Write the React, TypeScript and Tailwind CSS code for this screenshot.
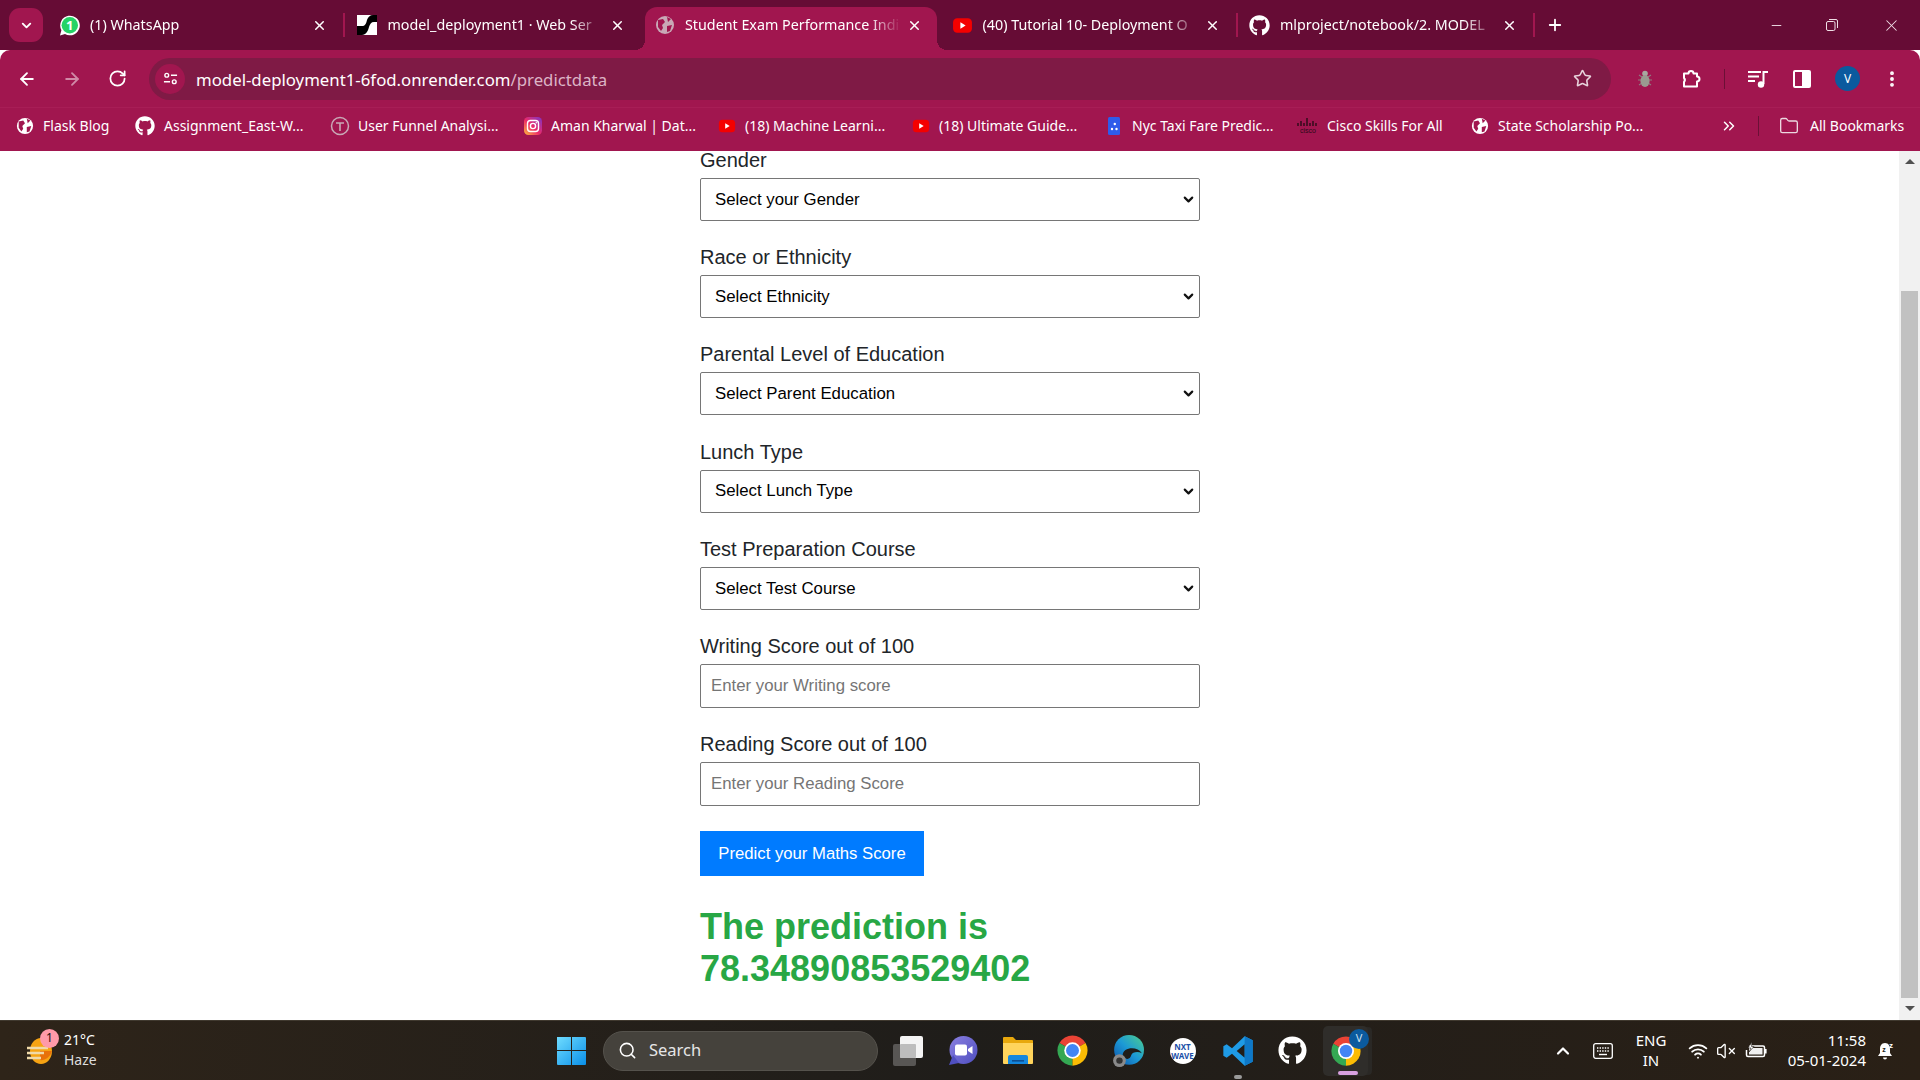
import React from "react";
import { ArrowLeft, ArrowRight, RotateCw, Star, X, Plus, Minus, ChevronDown, ChevronsRight, Folder, ChevronUp, Wifi, VolumeX, Search, EllipsisVertical } from "lucide-react";
import { FaGithub } from "react-icons/fa";

const ui = "font-['Noto_Sans',sans-serif]";

function ChromeIcon({ cls }: { cls: string }) {
  return (
    <svg viewBox="0 0 24 24" className={cls}>
      <path d="M12 12 L21.5 6.5 A11 11 0 0 0 2.5 6.5 Z" fill="#ea4335" />
      <path d="M12 12 L2.5 6.5 A11 11 0 0 0 12 23 Z" fill="#34a853" />
      <path d="M12 12 L12 23 A11 11 0 0 0 21.5 6.5 Z" fill="#fbbc04" />
      <circle cx="12" cy="12" r="6" fill="#fff" />
      <circle cx="12" cy="12" r="4.7" fill="#4285f4" />
    </svg>
  );
}
function Yt({ cls = "w-[18px] h-[18px] shrink-0" }: { cls?: string }) {
  return (
    <svg viewBox="0 0 20 20" className={cls}>
      <rect x="1" y="3" width="18" height="14" rx="4" fill="#f40000" />
      <path d="M8 7 L13 10 L8 13 Z" fill="#fff" />
    </svg>
  );
}
function Insta() {
  return (
    <svg viewBox="0 0 20 20" className="w-[20px] h-[20px] shrink-0">
      <defs>
        <linearGradient id="ig" x1="0" y1="1" x2="1" y2="0">
          <stop offset="0" stopColor="#fdc13a" />
          <stop offset="0.45" stopColor="#ee2a67" />
          <stop offset="1" stopColor="#7a35c9" />
        </linearGradient>
      </defs>
      <rect x="1" y="1" width="18" height="18" rx="4.5" fill="url(#ig)" />
      <rect x="4.5" y="4.5" width="11" height="11" rx="3" fill="none" stroke="#fff" strokeWidth="1.4" />
      <circle cx="10" cy="10" r="2.6" fill="none" stroke="#fff" strokeWidth="1.4" />
      <circle cx="13.3" cy="6.7" r="0.8" fill="#fff" />
    </svg>
  );
}
function WhatsIcon() {
  return (
    <svg viewBox="0 0 21 21" className="w-[21px] h-[21px] shrink-0">
      <path d="M1 20.5 L2.4 15.2 A9.8 9.8 0 1 1 6 18.9 Z" fill="#fff" />
      <circle cx="10.8" cy="10.3" r="8.2" fill="#25d366" />
      <text x="10.8" y="15" textAnchor="middle" fontSize="13" fontWeight="700" fill="#fff" fontFamily="Noto Sans">1</text>
    </svg>
  );
}
function RenderIcon() {
  return (
    <svg viewBox="0 0 20 20" className="w-[20px] h-[20px] shrink-0">
      <rect width="20" height="20" fill="#fff" />
      <path d="M0 20 V11 H5 C8 11 9 9 10 5 C11 2 13 0 16 0 H20 V7 H17 C14 7 13 9 12 12 C11 16 9 20 5 20 Z" fill="#000" />
    </svg>
  );
}
function GlobeFill({ cls, bg = "#a1164f" }: { cls: string; bg?: string }) {
  return (
    <svg viewBox="0 0 20 20" className={cls}>
      <circle cx="10" cy="10" r="9" fill="currentColor" />
      <path d="M3 5 L8 4 L10 7 L7 10 L8 13 L6 16 L3 12 Z M12 2 L16 4 L13 7 Z M12 11 L17 10 L15 16 L12 17 Z" fill={bg} />
    </svg>
  );
}
function FunnelIcon() {
  return (
    <svg viewBox="0 0 20 20" className="w-[20px] h-[20px] shrink-0">
      <circle cx="10" cy="10" r="8.5" fill="none" stroke="#c9a8b6" strokeWidth="1.5" />
      <path d="M6 7 H14 M10 7 V15" stroke="#c9a8b6" strokeWidth="1.6" />
    </svg>
  );
}
function NycIcon() {
  return (
    <svg viewBox="0 0 20 20" className="w-[20px] h-[20px] shrink-0">
      <rect x="4" y="1" width="12" height="18" rx="1.5" fill="#2f5bea" />
      <circle cx="10.8" cy="8" r="1.2" fill="#fff" />
      <circle cx="8" cy="13" r="1.2" fill="#fff" />
      <circle cx="12.5" cy="13" r="1.2" fill="#fff" />
    </svg>
  );
}
function CiscoIcon() {
  return (
    <svg viewBox="0 0 22 20" className="w-[22px] h-[20px] shrink-0">
      <path d="M1 7 V10 M4 5 V10 M7 7 V10 M10 2 V10 M13 7 V10 M16 5 V10 M19 7 V10" stroke="#2b0a18" strokeWidth="1.4" />
      <text x="11" y="17" textAnchor="middle" fontSize="7" fill="#2b0a18" fontFamily="Liberation Sans">cisco</text>
    </svg>
  );
}

const tabs = [
  { icon: <WhatsIcon />, title: "(1) WhatsApp", sep: true },
  { icon: <RenderIcon />, title: "model_deployment1 · Web Ser", sep: false },
  { icon: <GlobeFill cls="w-[20px] h-[20px] shrink-0 text-[#c9a8b6]" />, title: "Student Exam Performance Indi", active: true, sep: false },
  { icon: <Yt cls="w-[21px] h-[21px] shrink-0" />, title: "(40) Tutorial 10- Deployment O", sep: true },
  { icon: <FaGithub className="w-[21px] h-[21px] shrink-0 text-white" />, title: "mlproject/notebook/2. MODEL", sep: true },
];

function TabStrip() {
  return (
    <div className="flex items-end h-[50px] bg-[#660c35] pl-[9px] shrink-0">
      <div className="w-[34px] h-[34px] mb-[8px] mr-[7px] rounded-[11px] bg-[#a1164f] flex items-center justify-center shrink-0">
        <ChevronDown className="w-[15px] h-[15px] text-white" strokeWidth={3} />
      </div>
      {tabs.map((t) => (
        <div key={t.title} className="flex items-center w-[297.5px] shrink-0 h-[43px]">
          <div className={`relative flex items-center w-[292px] h-[43px] pl-[9px] pb-[7px] rounded-t-[12px] shrink-0 ${t.active ? "bg-[#a1164f]" : ""}`}>
            {t.active && (
              <>
                <div className="absolute -left-[10px] bottom-0 w-[10px] h-[10px] bg-[radial-gradient(circle_at_0_0,transparent_10px,#a1164f_10px)]" />
                <div className="absolute -right-[10px] bottom-0 w-[10px] h-[10px] bg-[radial-gradient(circle_at_100%_0,transparent_10px,#a1164f_10px)]" />
              </>
            )}
            <div className="w-[21px] flex justify-center shrink-0">{t.icon}</div>
            <div className={`ml-[10px] w-[216px] overflow-hidden whitespace-nowrap text-[14.3px] text-white [mask-image:linear-gradient(to_right,black_85%,transparent)] ${ui}`}>
              {t.title}
            </div>
            <X className="w-[15px] h-[15px] text-white ml-[6px] shrink-0" strokeWidth={2.4} />
          </div>
          <div className={`w-[2px] h-[24px] ml-[1px] mb-[7px] shrink-0 ${t.sep ? "bg-[#a1164f]" : ""}`} />
        </div>
      ))}
      <Plus className="w-[18px] h-[18px] text-white mb-[16px] ml-[8px] shrink-0" strokeWidth={2.4} />
      <div className="ml-auto flex self-start h-[50px] items-center pr-[1px]">
        <div className="w-[56px] flex justify-center"><Minus className="w-[15px] h-[15px] text-[#f0dfe6]" strokeWidth={1.5} /></div>
        <div className="w-[56px] mr-[3px] flex justify-center">
          <svg viewBox="0 0 14 14" className="w-[14px] h-[14px]">
            <rect x="1.5" y="3.5" width="8.5" height="9" rx="1.5" fill="none" stroke="#f0dfe6" strokeWidth="1" />
            <path d="M4 1.5 H11 Q12.5 1.5 12.5 3 V10" fill="none" stroke="#f0dfe6" strokeWidth="1" />
          </svg>
        </div>
        <div className="w-[56px] flex justify-center"><X className="w-[19px] h-[19px] text-[#f0dfe6]" strokeWidth={1.3} /></div>
      </div>
    </div>
  );
}

function Toolbar() {
  return (
    <div className="flex items-center h-[57px] bg-[#a1164f] rounded-t-[10px] shrink-0 pl-[17px]">
      <ArrowLeft className="w-[20px] h-[20px] text-white shrink-0" strokeWidth={2.2} />
      <ArrowRight className="w-[20px] h-[20px] text-[#d08aa7] ml-[25px] shrink-0" strokeWidth={2.2} />
      <RotateCw className="w-[19px] h-[19px] text-white ml-[26px] shrink-0" strokeWidth={2.2} />
      <div className="flex items-center ml-[22px] w-[1462px] h-[42px] rounded-full bg-[#7f1a45] pl-[6px] shrink-0">
        <div className="w-[30px] h-[30px] rounded-full bg-[#a1164f] flex items-center justify-center shrink-0">
          <svg viewBox="0 0 16 16" className="w-[15px] h-[15px]">
            <circle cx="4" cy="4.5" r="2" fill="none" stroke="#fff" strokeWidth="1.5" />
            <path d="M8.5 4.5 H15 M1 11.5 H7.5" stroke="#fff" strokeWidth="1.5" />
            <circle cx="12" cy="11.5" r="2" fill="none" stroke="#fff" strokeWidth="1.5" />
          </svg>
        </div>
        <div className={`ml-[11px] mt-[2px] text-[16.8px] text-white whitespace-nowrap ${ui}`}>
          model-deployment1-6fod.onrender.com<span className="text-[#dcb4c5]">/predictdata</span>
        </div>
        <Star className="w-[19px] h-[19px] text-[#e8d3dc] ml-auto mr-[19px] shrink-0" strokeWidth={2} />
      </div>
      <svg viewBox="0 0 16 20" className="w-[16px] h-[20px] ml-[26px] shrink-0">
        <path d="M2 6 L5 8 M14 6 L11 8 M1 11 H4 M15 11 H12 M2 16 L5 14 M14 16 L11 14" stroke="#8f7a80" strokeWidth="1.2" />
        <circle cx="8" cy="4.5" r="2.8" fill="#a8a8a0" />
        <ellipse cx="8" cy="12" rx="4.6" ry="6" fill="#9a9a90" />
      </svg>
      <svg viewBox="0 0 20 18" className="w-[20px] h-[18px] ml-[29px] shrink-0">
        <path d="M2 3.5 H6.5 A2.5 2.5 0 0 1 11.5 3.5 H15 V6.5 A2.5 2.5 0 0 1 15 11.5 V16.5 H2 V12 A3 3 0 0 0 2 8 Z" fill="none" stroke="#fff" strokeWidth="2" strokeLinejoin="round" />
      </svg>
      <div className="w-[1px] h-[20px] bg-[#6b1036] ml-[22px] shrink-0" />
      <svg viewBox="0 0 22 20" className="w-[22px] h-[20px] ml-[22px] shrink-0">
        <path d="M1 3 H14 M1 7.5 H12 M1 12 H8" stroke="#fff" strokeWidth="2.2" />
        <path d="M16.5 15 V3 H21" fill="none" stroke="#fff" strokeWidth="2" />
        <circle cx="14" cy="15.5" r="3.2" fill="#fff" />
      </svg>
      <div className="w-[18px] h-[18px] ml-[24px] border-2 border-white rounded-[2px] flex justify-end shrink-0">
        <div className="w-[7px] h-full bg-white" />
      </div>
      <div className={`w-[25px] h-[25px] ml-[24px] rounded-full bg-[#0b5a9e] text-white text-[12px] flex items-center justify-center shrink-0 ${ui}`}>V</div>
      <EllipsisVertical className="w-[20px] h-[20px] text-white ml-[22px] shrink-0" strokeWidth={2.6} />
    </div>
  );
}

const bookmarks = [
  { icon: <GlobeFill cls="w-[18px] h-[18px] shrink-0 text-white" />, label: "Flask Blog", cls: "ml-[16px]", tx: "ml-[9px] w-[65px]" },
  { icon: <FaGithub className="w-[20px] h-[20px] shrink-0 text-white" />, label: "Assignment_East-W...", cls: "ml-[27px]", tx: "ml-[9px] w-[140px]" },
  { icon: <FunnelIcon />, label: "User Funnel Analysi...", cls: "ml-[26px]", tx: "ml-[8px] w-[139px]" },
  { icon: <Insta />, label: "Aman Kharwal | Dat...", cls: "ml-[26px]", tx: "ml-[8px] w-[140px]" },
  { icon: <Yt />, label: "(18) Machine Learni...", cls: "ml-[27px]", tx: "ml-[9px] w-[141px]" },
  { icon: <Yt />, label: "(18) Ultimate Guide...", cls: "ml-[26px]", tx: "ml-[9px] w-[138px]" },
  { icon: <NycIcon />, label: "Nyc Taxi Fare Predic...", cls: "ml-[27px]", tx: "ml-[8px] w-[141px]" },
  { icon: <CiscoIcon />, label: "Cisco Skills For All", cls: "ml-[24px]", tx: "ml-[8px] w-[118px]" },
  { icon: <GlobeFill cls="w-[18px] h-[18px] shrink-0 text-white" />, label: "State Scholarship Po...", cls: "ml-[26px]", tx: "ml-[9px] w-[145px]" },
];

function Bookmarks() {
  return (
    <div className={`flex items-center h-[44px] pb-[8px] bg-[#a1164f] border-t border-[#a81d56] shrink-0 text-[14px] text-white whitespace-nowrap ${ui}`}>
      {bookmarks.map((b) => (
        <div key={b.label} className={`flex items-center shrink-0 ${b.cls}`}>
          {b.icon}
          <div className={b.tx}>{b.label}</div>
        </div>
      ))}
      <ChevronsRight className="w-[18px] h-[18px] text-white ml-[77px] shrink-0" />
      <div className="w-[1px] h-[20px] bg-[#6b1036] ml-[20px] shrink-0" />
      <Folder className="w-[20px] h-[20px] text-[#ecd8e0] ml-[20px] shrink-0" strokeWidth={1.6} />
      <div className="ml-[11px]">All Bookmarks</div>
    </div>
  );
}

function SelectField({ label, text }: { label: string; text: string }) {
  return (
    <div className="mb-[24.2px]">
      <label className="block h-[24px] leading-[24px] text-[20px] mb-[6px] text-[#212529]">{label}</label>
      <div className="relative">
        <select className="block appearance-none w-full h-[43px] border border-[#767676] rounded-[2px] bg-white pl-[14px] text-[16.8px] text-black">
          <option>{text}</option>
        </select>
        <ChevronDown className="absolute right-[4px] top-[14px] w-[15px] h-[15px] text-[#111111] pointer-events-none" strokeWidth={3.4} />
      </div>
    </div>
  );
}
function InputField({ label, text }: { label: string; text: string }) {
  return (
    <div className="mb-[24px]">
      <label className="block h-[24px] leading-[24px] text-[20px] mb-[6px] text-[#212529]">{label}</label>
      <input placeholder={text} className="block w-full h-[44px] border border-[#767676] rounded-[2px] bg-white pl-[10px] text-[16.8px] placeholder:text-[#757575]" />
    </div>
  );
}

function Page() {
  return (
    <div className="flex flex-1 min-h-0 bg-white">
      <main className="flex-1 overflow-hidden pt-[1px] font-['Liberation_Sans',sans-serif]">
        <div className="w-[500px] ml-[700px] -mt-[4px]">
          <SelectField label="Gender" text="Select your Gender" />
          <SelectField label="Race or Ethnicity" text="Select Ethnicity" />
          <SelectField label="Parental Level of Education" text="Select Parent Education" />
          <SelectField label="Lunch Type" text="Select Lunch Type" />
          <SelectField label="Test Preparation Course" text="Select Test Course" />
          <InputField label="Writing Score out of 100" text="Enter your Writing score" />
          <InputField label="Reading Score out of 100" text="Enter your Reading Score" />
          <button className="block h-[45px] w-[224px] mt-[25px] bg-[#007bff] text-white text-[16.7px]">Predict your Maths Score</button>
          <h2 className="mt-[30px] text-[36px] leading-[42px] font-bold text-[#28a745] w-[400px]">The prediction is 78.34890853529402</h2>
        </div>
      </main>
      <aside className="w-[21px] shrink-0 bg-[#f1f1f1] flex flex-col items-center">
        <div className="h-[21px] flex items-center justify-center shrink-0">
          <div className="w-0 h-0 border-x-[5px] border-x-transparent border-b-[5px] border-b-[#505050]" />
        </div>
        <div className="h-[119px] shrink-0" />
        <div className="h-[707px] w-[17px] bg-[#c1c1c1] shrink-0" />
        <div className="h-[21px] flex items-center justify-center shrink-0">
          <div className="w-0 h-0 border-x-[5px] border-x-transparent border-t-[5px] border-t-[#505050]" />
        </div>
      </aside>
    </div>
  );
}

function Taskbar() {
  return (
    <div className={`h-[60px] shrink-0 flex items-center border-t border-[#40392f] bg-gradient-to-r from-[#2e2419] via-[#1f1d1a] to-[#2a2016] text-white ${ui}`}>
      <div className="relative w-[26px] h-[26px] ml-[26px] shrink-0">
        <svg viewBox="0 0 26 26" className="w-[26px] h-[26px]">
          <ellipse cx="15" cy="13" rx="11" ry="13" fill="#f6a313" />
          <path d="M14 22 A11 13 0 0 0 26 13 H14 Z" fill="#e8710a" />
          <path d="M1 10 H22 M1 15 H18 M1 20 H15" stroke="#f0d9a8" strokeWidth="2.4" />
        </svg>
        <div className="absolute -top-[9px] left-[14px] w-[19px] h-[19px] rounded-full bg-[#ff9aa9] text-[#201010] text-[12px] flex items-center justify-center">1</div>
      </div>
      <div className="ml-[12px] mb-[2px] w-[40px] text-[14px] leading-[20px] shrink-0">
        <div>21°C</div>
        <div className="text-[#dddddd]">Haze</div>
      </div>
      <svg viewBox="0 0 29 29" className="w-[29px] h-[29px] ml-[453px] shrink-0">
        <defs>
          <linearGradient id="win" x1="0" y1="0" x2="1" y2="1">
            <stop offset="0" stopColor="#6fdcff" />
            <stop offset="1" stopColor="#0a8fe8" />
          </linearGradient>
        </defs>
        <path d="M0 1 H14 V14 H0 Z M15 1 H28 Q29 1 29 2 V14 H15 Z M0 15 H14 V29 H1 Q0 29 0 28 Z M15 15 H29 V28 Q29 29 28 29 H15 Z" fill="url(#win)" />
      </svg>
      <div className="ml-[17px] w-[275px] h-[40px] rounded-full bg-[#45423c] border border-[#55524c] flex items-center pl-[14px] shrink-0">
        <Search className="w-[19px] h-[19px] text-white" strokeWidth={2} />
        <span className="ml-[12px] text-[16.5px] text-[#e6e6e6]">Search</span>
      </div>
      <div className="ml-[2px] flex items-center shrink-0">
        <div className="w-[55px] flex justify-center">
          <svg viewBox="0 0 30 30" className="w-[30px] h-[30px]">
            <rect x="0" y="8" width="23" height="22" rx="2" fill="#585654" />
            <rect x="7" y="0" width="23" height="22" rx="2" fill="#f4f4f4" />
            <rect x="7" y="8" width="16" height="14" rx="1" fill="#bdbdbd" />
          </svg>
        </div>
        <div className="w-[55px] flex justify-center">
          <svg viewBox="0 0 30 30" className="w-[30px] h-[30px]">
            <defs>
              <linearGradient id="tm" x1="0" y1="0" x2="1" y2="1">
                <stop offset="0" stopColor="#8a7fe0" />
                <stop offset="1" stopColor="#4f4fc0" />
              </linearGradient>
            </defs>
            <circle cx="15.5" cy="14" r="14" fill="url(#tm)" />
            <path d="M1 29 L5 19 L11 27 Z" fill="#4f4fc0" />
            <rect x="7" y="8.5" width="12" height="11" rx="2" fill="#fff" />
            <path d="M20 13 L24.5 10 V18 L20 15 Z" fill="#fff" />
          </svg>
        </div>
        <div className="w-[55px] flex justify-center">
          <svg viewBox="0 0 30 27" className="w-[30px] h-[27px]">
            <path d="M0 1 Q0 0 1 0 H10 L13 3 H29 Q30 3 30 4 V10 H0 Z" fill="#e8a80c" />
            <path d="M0 6 H30 V26 Q30 27 29 27 H1 Q0 27 0 26 Z" fill="#ffd45c" />
            <path d="M5 20 Q5 18 7 18 H23 Q25 18 25 20 V27 H5 Z" fill="#1487de" />
            <rect x="9" y="23" width="12" height="1.6" fill="#0c4f94" />
          </svg>
        </div>
        <div className="w-[55px] flex justify-center"><ChromeIcon cls="w-[33px] h-[33px]" /></div>
        <div className="w-[55px] flex justify-center">
          <svg viewBox="0 0 30 30" className="w-[32px] h-[32px]">
            <defs>
              <linearGradient id="edge" x1="1" y1="0" x2="0" y2="1">
                <stop offset="0" stopColor="#4fd08a" />
                <stop offset="0.5" stopColor="#1c9ad6" />
                <stop offset="1" stopColor="#0c4fa8" />
              </linearGradient>
            </defs>
            <circle cx="16" cy="14" r="14" fill="url(#edge)" />
            <path d="M10 19 C10 11 24 10 28 17 C24 15 19 16 18 19 C17 23 13 24 10 19 Z" fill="#1f1d1a" />
            <circle cx="7" cy="24" r="6" fill="#8a8a8a" />
            <circle cx="7" cy="24" r="3" fill="#333" />
          </svg>
        </div>
        <div className="w-[55px] flex justify-center">
          <div className="w-[26px] h-[26px] rounded-full bg-white text-[#1b4fa8] text-[8px] leading-[9px] font-bold flex flex-col items-center justify-center">
            <span>NXT</span><span>WAVE</span>
          </div>
        </div>
        <div className="w-[55px] flex flex-col items-center relative">
          <svg viewBox="0 0 24 24" className="w-[32px] h-[32px]">
            <path fillRule="evenodd" d="M17 1 L23 4 V20 L17 23 L7.5 14 L3.5 17 L1 15.5 V8.5 L3.5 7 L7.5 10 Z M17 7 L11 12 L17 17 Z" fill="#1f9be6" />
            <path d="M17 1 L23 4 V20 L17 23 Z" fill="#0e78c8" />
          </svg>
          <div className="absolute -bottom-[12px] w-[8px] h-[4px] rounded-full bg-[#9a9a9a]" />
        </div>
        <div className="w-[55px] flex justify-center">
          <FaGithub className="w-[29px] h-[29px] text-white" />
        </div>
        <div className="relative w-[45px] h-[50px] ml-[3px] rounded-[5px] bg-[#2f2d2a] shadow-[5px_0_0_-1px_#2a2825] flex items-center justify-center">
          <ChromeIcon cls="w-[32px] h-[32px]" />
          <div className="absolute top-[3px] right-[-1px] w-[20px] h-[20px] rounded-full bg-[#0b5a9e] text-[#cfe0f0] text-[11px] flex items-center justify-center">V</div>
          <div className="absolute bottom-[1px] left-[15px] w-[20px] h-[4px] rounded-full bg-[#d8a0e0]" />
        </div>
      </div>
      <ChevronUp className="w-[20px] h-[20px] text-white ml-[185px] shrink-0" strokeWidth={2.6} />
      <svg viewBox="0 0 20 16" className="w-[20px] h-[16px] ml-[20px] shrink-0">
        <rect x="0.7" y="0.7" width="18.6" height="14.6" rx="2" fill="none" stroke="#fff" strokeWidth="1.3" />
        <path d="M4 5 H16 M4 8 H16" stroke="#fff" strokeWidth="1.4" strokeDasharray="1.4 1.2" />
        <path d="M6 11.5 H14" stroke="#fff" strokeWidth="1.4" />
      </svg>
      <div className="ml-[19px] w-[38px] text-center text-[15px] leading-[20px] mb-[2px] shrink-0">
        <div>ENG</div>
        <div>IN</div>
      </div>
      <Wifi className="w-[20px] h-[20px] text-white ml-[18px] shrink-0" strokeWidth={2.2} />
      <VolumeX className="w-[20px] h-[20px] text-white ml-[8px] shrink-0" strokeWidth={1.6} />
      <svg viewBox="0 0 22 18" className="w-[22px] h-[18px] ml-[9px] shrink-0">
        <path d="M4 4 H18 Q19.5 4 19.5 5.5 V13 Q19.5 14.5 18 14.5 H3 Q1.5 14.5 1.5 13 V8" fill="none" stroke="#fff" strokeWidth="1.5" />
        <path d="M4 6 H17.5 V12.5 H4 Z" fill="#f0f0f0" />
        <path d="M7 0 L3 6 H6 L4 10 L9 4.5 H6.5 Z" fill="#fff" stroke="#221d17" strokeWidth="0.6" />
        <rect x="20" y="7" width="1.6" height="4.5" fill="#fff" />
      </svg>
      <div className="ml-[18px] w-[81px] text-right text-[15px] leading-[20px] mb-[2px] shrink-0">
        <div>11:58</div>
        <div>05-01-2024</div>
      </div>
      <svg viewBox="0 0 18 20" className="w-[18px] h-[20px] ml-[11px] shrink-0">
        <path d="M8 2 C4.5 2 3 5 3 8 V12 L1 15 H15 L13 12 V8 C13 5 11.5 2 8 2 Z" fill="#fff" />
        <path d="M6 16.5 H10 A2 2 0 0 1 6 16.5 Z" fill="#fff" />
        <text x="5.2" y="11" fontSize="7" fontWeight="700" fill="#221d17" fontFamily="Liberation Sans">z</text>
        <text x="12" y="6.5" fontSize="8" fontWeight="700" fill="#fff" fontFamily="Liberation Sans">z</text>
      </svg>
    </div>
  );
}

export default function App() {
  return (
    <div className="w-[1920px] h-screen flex flex-col overflow-hidden">
      <TabStrip />
      <Toolbar />
      <Bookmarks />
      <Page />
      <Taskbar />
    </div>
  );
}
